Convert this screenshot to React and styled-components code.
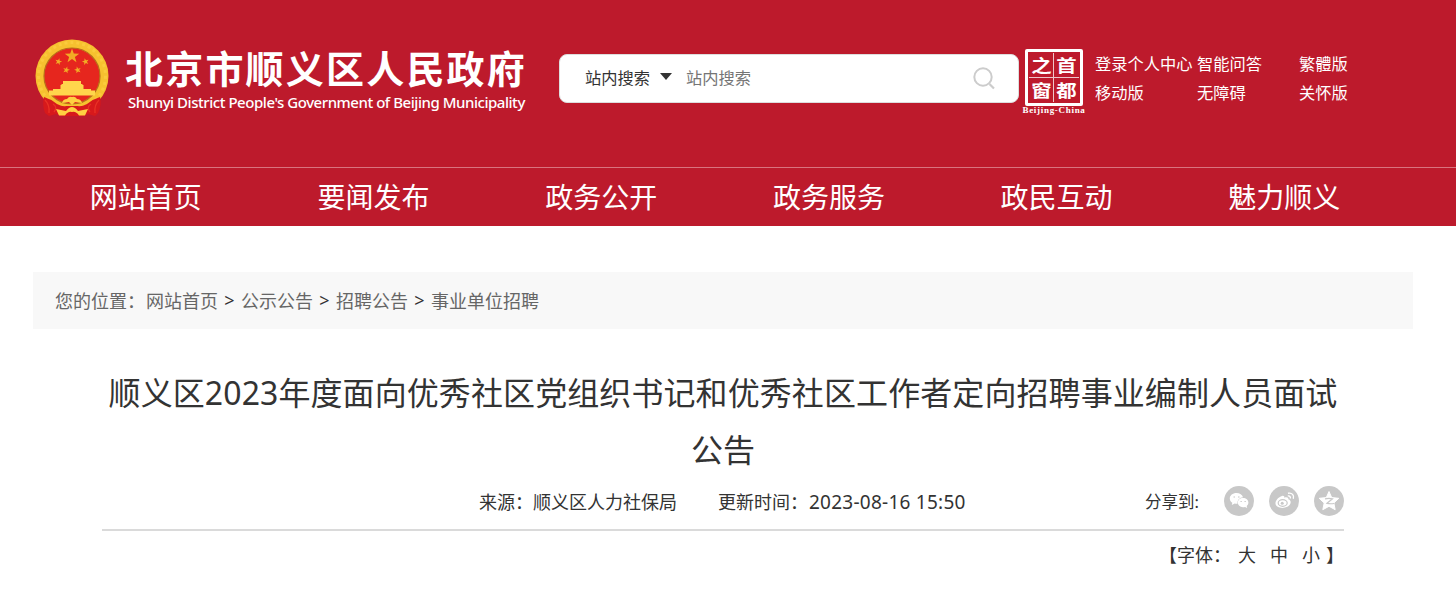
import React from 'react';
import styled, { createGlobalStyle } from 'styled-components';

const Global = createGlobalStyle`
  *{box-sizing:border-box}
  body{margin:0;background:#fff;color:#333;font-family:"Noto Sans","Noto Sans CJK SC",sans-serif;overflow:hidden}
  a{color:inherit;text-decoration:none}
`;

const Header = styled.header`
  height:226px;background:#bd1a2c;color:#fff;
`;
const Top = styled.div`
  height:168px;border-bottom:1px solid #d9747f;display:flex;align-items:flex-start;
`;
const Brand = styled.div`
  display:flex;flex:none;margin-left:32px;padding-top:36px;width:527px;
`;
const Emblem = styled.svg`
  width:80px;height:84px;flex:none;
`;
const BrandText = styled.div`
  padding:6px 0 0 13px;white-space:nowrap;
`;
const BrandName = styled.div`
  font:700 38px/50px "Noto Sans CJK SC",sans-serif;letter-spacing:2.2px;
`;
const BrandEnglish = styled.div`
  font:500 15px/20px "Noto Sans",sans-serif;padding-left:3px;letter-spacing:-.46px;
`;
const Search = styled.form`
  width:460px;height:49px;margin-top:54px;background:#fff;border:1px solid #ddd;border-radius:8px;flex:none;
  display:flex;align-items:center;padding:0 23px 4px 25px;font-size:16.25px;color:#333;
`;
const Caret = styled.span`
  border:6px solid transparent;border-top:7px solid #333;border-bottom:0;margin:0 14px 0 10px;
`;
const Placeholder = styled.span`
  color:#757575;flex:1;padding-top:1px;
`;
const SearchIcon = styled.svg`
  width:22px;height:23px;margin-top:4px;
`;
const Seal = styled.div`
  width:66px;margin:49px 0 0 2px;display:flex;flex:none;flex-direction:column;align-items:center;
`;
const SealGrid = styled.div`
  width:58px;height:57px;border:3px solid #fff;border-radius:2px;display:grid;grid-template-columns:1fr 1fr;
  grid-template-rows:1fr 1fr;padding:1px;
`;
const SealCell = styled.span`
  display:flex;align-items:center;justify-content:center;font:700 17px/17px "Noto Sans CJK SC",sans-serif;
  border:solid rgba(255,255,255,.75);border-width:0 ${p => (p.$left ? 1 : 0)}px ${p => (p.$top ? 1 : 0)}px 0;
`;
const SealGlyph = styled.span`
  transform:scaleX(1.2);
`;
const SealCaption = styled.span`
  font:700 9px/9px "Liberation Serif",serif;letter-spacing:.7px;white-space:nowrap;
`;
const Links = styled.div`
  display:grid;grid-template-columns:102px 102px 60px;grid-auto-rows:29px;margin:50px 0 0 8px;
  font-size:16.25px;line-height:29px;white-space:nowrap;
`;
const Nav = styled.nav`
  display:flex;height:58px;padding-left:32px;font-size:28px;line-height:58px;
`;
const NavItem = styled.a`
  width:227.7px;text-align:center;
`;
const Crumbs = styled.div`
  height:57px;margin:46px 43px 0 33px;padding:0 0 2px 22px;background:#f8f8f8;display:flex;align-items:center;
  font-size:18px;color:#666;white-space:pre;
`;
const CrumbLabel = styled.span`
  width:91px;
`;
const Sep = styled.span`
  color:#333;width:23px;text-align:center;
`;
const Article = styled.main`
  width:1242px;margin:35px 0 0 102px;
`;
const Title = styled.h1`
  margin:0;font-weight:400;font-size:32px;line-height:57px;letter-spacing:.09px;text-align:center;white-space:nowrap;
`;
const Meta = styled.div`
  height:53px;border-bottom:2px solid #dadada;display:flex;align-items:center;padding:0 0 3px 377px;
  font-size:18px;line-height:26px;white-space:pre;
`;
const Source = styled.span`
  width:239px;flex:none;
`;
const Updated = styled.span`
  width:427px;flex:none;display:flex;
`;
const UpdatedLabel = styled.span`
  width:91px;
`;
const UpdatedTime = styled.time`
  font-size:19px;letter-spacing:.25px;
`;
const Share = styled.span`
  font-size:16.5px;width:79px;flex:none;
`;
const ShareList = styled.div`
  display:flex;gap:15px;margin-bottom:3px;
`;
const ShareIcon = styled.svg`
  width:30px;height:30px;flex:none;
`;
const FontSizes = styled.div`
  display:flex;justify-content:flex-end;height:48px;line-height:48px;font-size:18px;
`;
const SizeOptions = styled.span`
  display:flex;gap:14px;margin:0 6px 0 7px;
`;

const star = (cx, cy, r, rot = 0) =>
  Array.from({ length: 10 }, (_, i) => {
    const a = ((i * 36 - 90 + rot) * Math.PI) / 180;
    const q = i % 2 ? r * 0.4 : r;
    return `${(cx + q * Math.cos(a)).toFixed(2)},${(cy + q * Math.sin(a)).toFixed(2)}`;
  }).join(' ');

function NationalEmblem() {
  return (
    <Emblem viewBox="0 0 80 84">
      <circle cx="40" cy="40" r="36.5" fill="#f6c12f" />
      <circle cx="40" cy="40" r="33.5" fill="none" stroke="#fbca3d" strokeWidth="3" strokeDasharray="3 3" />
      <circle cx="40" cy="40" r="28" fill="#e6261e" stroke="#b9701a" strokeWidth="1.2" />
      <polygon points={star(40, 20, 7.6)} fill="#f2ac25" />
      <polygon points={star(26.5, 25.7, 3.6, 15)} fill="#f2ac25" />
      <polygon points={star(53.5, 25.7, 3.6, -15)} fill="#f2ac25" />
      <polygon points={star(34.3, 34, 3.6, 15)} fill="#f2ac25" />
      <polygon points={star(45.7, 34, 3.6, -15)} fill="#f2ac25" />
      <path d="M31 45H49V48H50.500V49.500H29.500V48H31ZM28.500 49H51.500V53H28.500ZM21 53H59V54.500H63V59.500H17V54.500H21Z" fill="#ffd54c" />
      <path d="M12 61Q19 63 25 68Q31 71 34 70H46Q49 71 55 68Q61 63 68 61Q70 69 66 77L63 80 56 78 51 80H29L24 78 17 80 13 77Q10 69 12 61Z" fill="#d7191b" />
      <path d="M13 64Q18 69 17 77M67 64Q62 69 63 77M21 68Q26 71 22 76M59 68Q54 71 58 76" fill="none" stroke="#e93125" strokeWidth="1.300" />
      <path d="M30 67Q31 63 35 63Q37 60 40 61Q43 60 45 63Q49 63 50 67L43 66 40 69 37 66Z" fill="#ffd042" />
      <path d="M24 73 34 75Q37 71 40 71Q43 71 46 75L56 73 53 79.500H47Q44 75 40 76Q36 75 33 79.500H27Z" fill="#ffd042" />
    </Emblem>
  );
}

function WechatIcon() {
  return (
    <ShareIcon viewBox="0 0 30 30">
      <circle cx="15" cy="15" r="15" fill="#c8c8c8" />
      <path d="M12.500 7C8.700 7 5.800 9.400 5.800 12.500c0 1.800.9 3.300 2.500 4.300L7.800 19l2.900-1.400c1 .2 1.800.3 2.800.2C13 14 15.800 11.500 19 11.300 18.400 8.700 15.700 7 12.500 7Z" fill="#fff" />
      <path d="M19 12c-3 0-5.200 2-5.200 4.600s2.200 4.600 5.200 4.600c.7 0 1.400-.1 2-.3l2.200 1.100-.5-2c1-.8 1.700-2 1.700-3.400 0-2.600-2.400-4.600-5.400-4.600Z" fill="#fff" />
      <path d="M9.500 11h1.500M14 11h1.500M16.500 15.500h1.300M20.500 15.500h1.300" stroke="#c8c8c8" strokeWidth="1.200" />
    </ShareIcon>
  );
}

function WeiboIcon() {
  return (
    <ShareIcon viewBox="0 0 30 30">
      <circle cx="15" cy="15" r="15" fill="#c8c8c8" />
      <path d="M13 10c1.500-.6 2.700.2 2.300 1.700 2.500-1 4.500-.3 4 1.600 3.900 1.200 2.700 5.700-1 7.500-4.500 2.200-11.300 1-11.800-3C6.200 14.500 9.500 11 13 10Z" fill="#fff" />
      <ellipse cx="13.700" cy="17" rx="4.500" ry="3.300" fill="none" stroke="#c8c8c8" strokeWidth="1.200" />
      <circle cx="13.200" cy="17.300" r="1.500" fill="#c8c8c8" />
      <path d="M19 7.300c4-1 6.500 2 5.300 5.500M18.800 10c2-.4 3 .9 2.400 2.500" fill="none" stroke="#fff" strokeWidth="1.400" />
    </ShareIcon>
  );
}

function QzoneIcon() {
  return (
    <ShareIcon viewBox="0 0 30 30">
      <circle cx="15" cy="15" r="15" fill="#c8c8c8" />
      <polygon points="15,5.500 17.700,11.600 24.800,12.300 19.800,17 21.200,23.700 15,20.300 8.800,23.700 10.200,17 5.200,12.300 12.300,11.600" fill="#fff" stroke="#fff" strokeWidth="1" strokeLinejoin="round" />
      <path d="M11 12.800c3-.5 5-.5 7.500 0L13 17.300c2.500.6 4.500.6 7 .2" fill="none" stroke="#c8c8c8" strokeWidth="1.200" />
    </ShareIcon>
  );
}

const sealCells = [
  { char: '之', left: true, top: true },
  { char: '首', left: false, top: true },
  { char: '窗', left: true, top: false },
  { char: '都', left: false, top: false },
];
const links = ['登录个人中心', '智能问答', '繁體版', '移动版', '无障碍', '关怀版'];
const navItems = ['网站首页', '要闻发布', '政务公开', '政务服务', '政民互动', '魅力顺义'];
const crumbs = ['网站首页', '公示公告', '招聘公告', '事业单位招聘'];

export default function App() {
  return (
    <>
      <Global />
      <Header>
        <Top>
          <Brand>
            <NationalEmblem />
            <BrandText>
              <BrandName>北京市顺义区人民政府</BrandName>
              <BrandEnglish>Shunyi District People's Government of Beijing Municipality</BrandEnglish>
            </BrandText>
          </Brand>
          <Search>
            <span>站内搜索</span>
            <Caret />
            <Placeholder>站内搜索</Placeholder>
            <SearchIcon viewBox="0 0 22 23">
              <circle cx="10" cy="10" r="8.700" fill="none" stroke="#ccc" strokeWidth="2" />
              <path d="m16.500 17 4.500 4.500" stroke="#ccc" strokeWidth="2.200" />
            </SearchIcon>
          </Search>
          <Seal>
            <SealGrid>
              {sealCells.map(c => (
                <SealCell key={c.char} $left={c.left} $top={c.top}>
                  <SealGlyph>{c.char}</SealGlyph>
                </SealCell>
              ))}
            </SealGrid>
            <SealCaption>Beijing-China</SealCaption>
          </Seal>
          <Links>{links.map(t => <a key={t}>{t}</a>)}</Links>
        </Top>
        <Nav>{navItems.map(t => <NavItem key={t}>{t}</NavItem>)}</Nav>
      </Header>
      <Crumbs>
        <CrumbLabel>您的位置：</CrumbLabel>
        {crumbs.map((t, i) => (
          <React.Fragment key={t}>
            {i > 0 && <Sep>&gt;</Sep>}
            <a>{t}</a>
          </React.Fragment>
        ))}
      </Crumbs>
      <Article>
        <Title>顺义区2023年度面向优秀社区党组织书记和优秀社区工作者定向招聘事业编制人员面试<br />公告</Title>
        <Meta>
          <Source>来源：顺义区人力社保局</Source>
          <Updated>
            <UpdatedLabel>更新时间：</UpdatedLabel>
            <UpdatedTime>2023-08-16 15:50</UpdatedTime>
          </Updated>
          <Share>分享到:</Share>
          <ShareList>
            <WechatIcon />
            <WeiboIcon />
            <QzoneIcon />
          </ShareList>
        </Meta>
        <FontSizes>
          <span>【字体：</span>
          <SizeOptions>
            <a>大</a>
            <a>中</a>
            <a>小</a>
          </SizeOptions>
          <span>】</span>
        </FontSizes>
      </Article>
    </>
  );
}
